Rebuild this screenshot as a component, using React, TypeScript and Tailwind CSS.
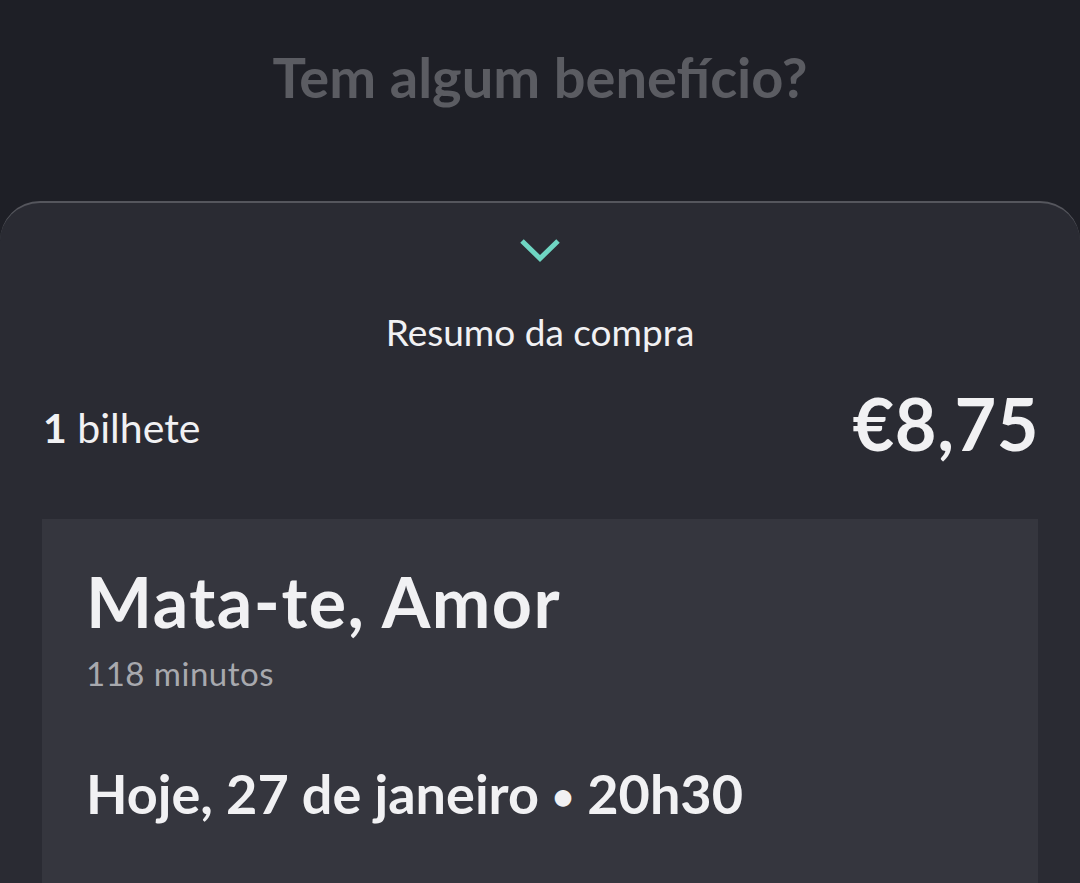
import React from 'react';

const ChevronDown = () => (
  <svg width="40" height="26" viewBox="0 0 40 26" fill="none">
    <path d="M2 4 L20 21.5 L38 4" stroke="#6fd6c3" strokeWidth="5" strokeLinejoin="miter" />
  </svg>
);

export default function App() {
  return (
    <div
      className="w-[1080px] h-[883px] overflow-hidden bg-[#1e1f26] flex flex-col"
      style={{ fontFamily: 'Lato, "Open Sans", sans-serif' }}
    >
      <div className="h-[201px] flex justify-center pt-[45px]">
        <h1 className="text-[56px] leading-[64px] font-bold text-[#5b5c62]">Tem algum benefício?</h1>
      </div>

      <div className="flex-1 bg-[#2a2b33] rounded-t-[40px] border-t-2 border-[#55565d] flex flex-col">
        <div className="flex justify-center pt-[34px]">
          <ChevronDown />
        </div>
        <div className="text-center text-[37px] leading-[40px] text-[#f1f1f3] mt-[49px]">Resumo da compra</div>

        <div className="flex items-start justify-between px-[43px] mt-[35px]">
          <div className="text-[41px] leading-[41px] text-[#f1f1f3] mt-[20px]">
            <span className="font-bold">1</span> bilhete
          </div>
          <div className="text-[72px] leading-[72px] font-bold text-[#f1f1f3] tracking-[0.5px] mr-[-2px]">€8,75</div>
        </div>

        <div className="flex-1 bg-[#35363e] mx-[42px] mt-[60px] px-[44px] pt-[42px]">
          <div className="text-[70px] leading-[80px] font-bold text-[#f1f1f3] tracking-[1.5px]">Mata-te, Amor</div>
          <div className="text-[33px] leading-[40px] text-[#a8a9ae] mt-[12px] tracking-[0.5px]">118 minutos</div>
          <div className="text-[54px] leading-[60px] font-bold text-[#f1f1f3] mt-[71px]">
            Hoje, 27 de janeiro <span className="text-[38px] relative -top-[4px]">•</span> 20h30
          </div>
        </div>
      </div>
    </div>
  );
}
